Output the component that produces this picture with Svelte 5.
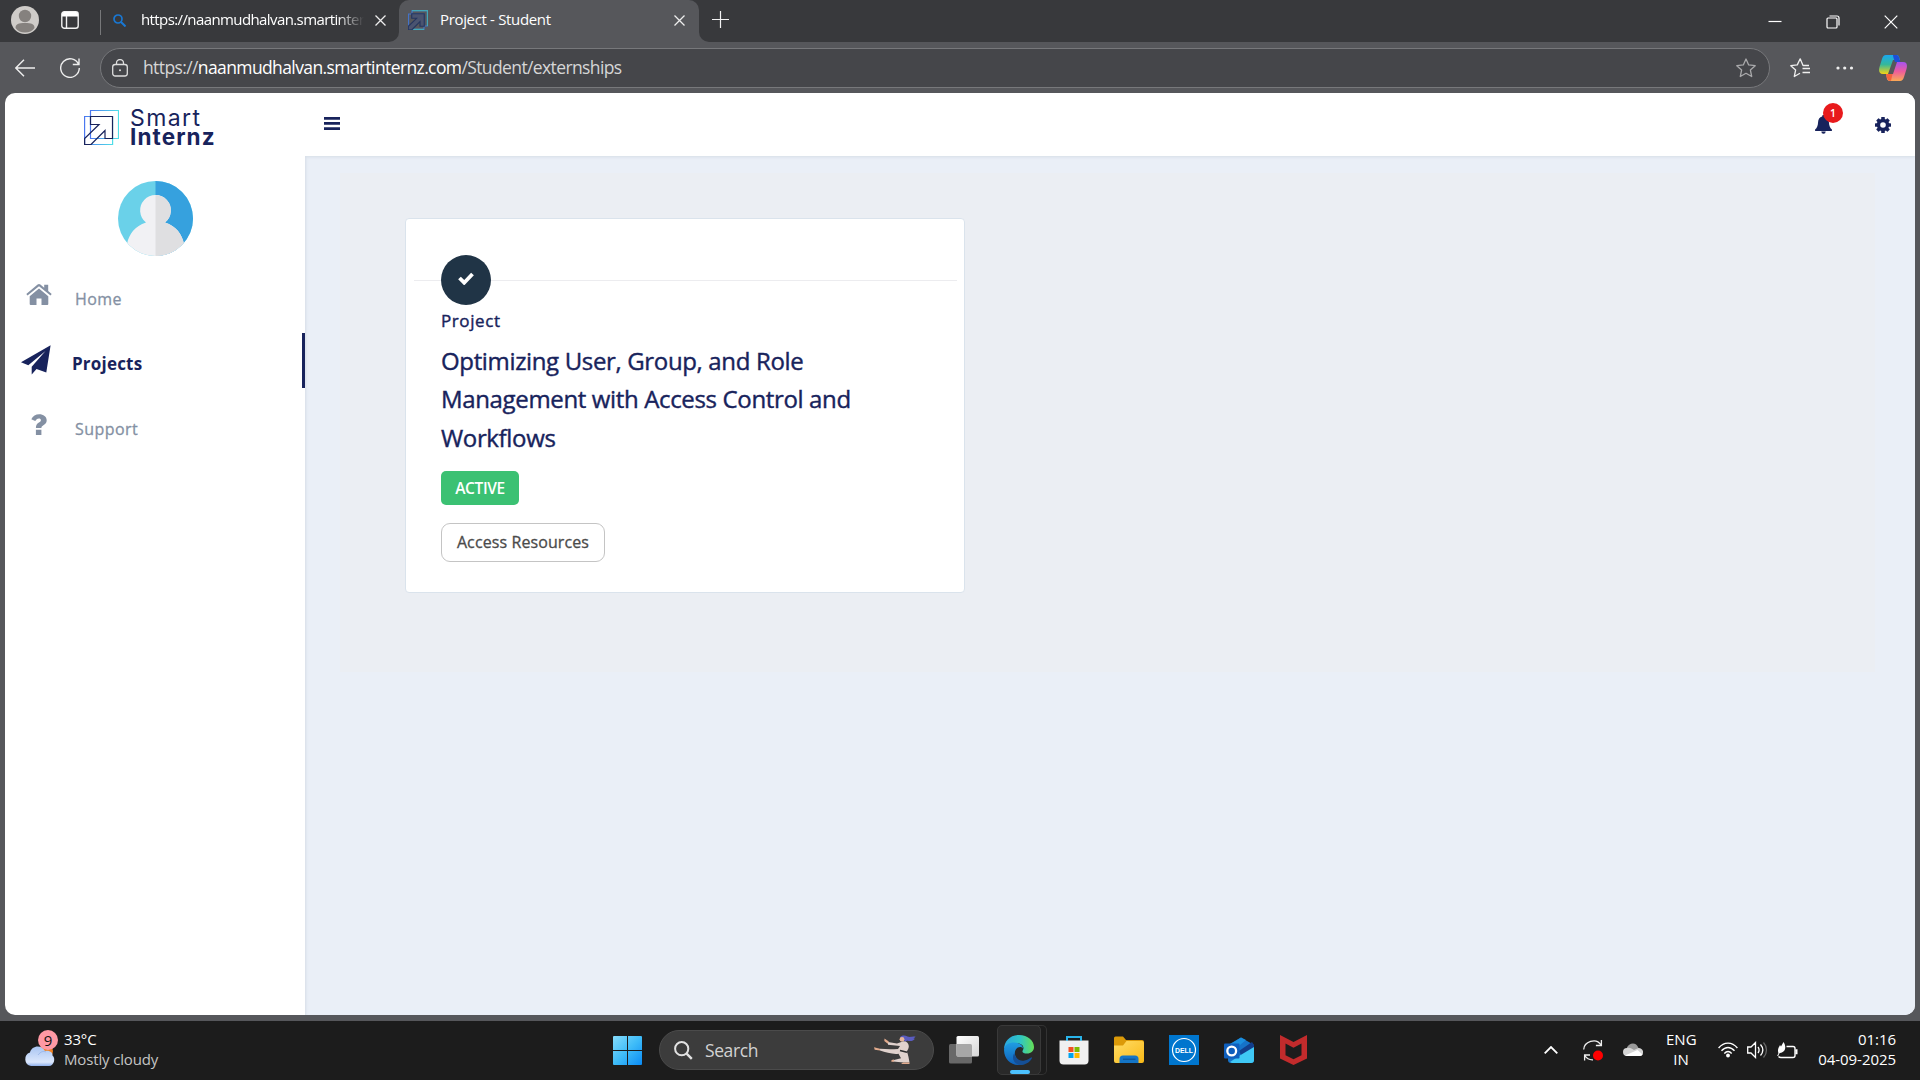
<script>
  const nav = [
    { label: 'Home', icon: 'home' },
    { label: 'Projects', icon: 'plane', active: true },
    { label: 'Support', icon: 'question' }
  ];
</script>

{#snippet logoMark()}
  <path d="M6.5.5h28v28h-28z" fill="none" stroke="url(#markA)" stroke-width="1.200" />
  <path d="M.6 6.500h28v28H.6z" fill="none" stroke="url(#markA)" stroke-width="1.200" />
  <path d="M6.500 6.500H28.500V28.500H21V20.500L7 34.500H.6V28.500L15 14.500H6.500Z" fill="none" stroke="#18235c" stroke-width="1.200" />
{/snippet}

<svg class="defs" width="0" height="0" aria-hidden="true">
  <defs>
    <linearGradient id="markA"><stop offset="0" stop-color="#4b78f0" /><stop offset="1" stop-color="#4fdfe8" /></linearGradient>
    <linearGradient id="win" x1="0" y1="0" x2="1" y2="1"><stop offset="0" stop-color="#86dcfb" /><stop offset=".5" stop-color="#3fbcf8" /><stop offset="1" stop-color="#0a8bf5" /></linearGradient>
    <linearGradient id="cloud" x1="0" y1="0" x2="0" y2="1"><stop offset="0" stop-color="#a9c5f2" /><stop offset=".8" stop-color="#dbe7fc" /><stop offset="1" stop-color="#8fb0ec" /></linearGradient>
    <linearGradient id="edgeA" x1="0" y1="0" x2="1" y2="0"><stop offset="0" stop-color="#2aa5e0" /><stop offset=".55" stop-color="#2fc6c4" /><stop offset="1" stop-color="#66df55" /></linearGradient>
    <linearGradient id="edgeB" x1="0" y1="0" x2="0" y2="1"><stop offset="0" stop-color="#1f9de3" /><stop offset="1" stop-color="#0f5fb8" /></linearGradient>
    <linearGradient id="folder" x1="0" y1="0" x2="1" y2="1"><stop offset="0" stop-color="#ffdc66" /><stop offset="1" stop-color="#f9b916" /></linearGradient>
    <linearGradient id="copA" x1="0" y1="0" x2="0" y2="1"><stop offset="0" stop-color="#1aa8f0" /><stop offset=".5" stop-color="#35b89a" /><stop offset="1" stop-color="#f5d414" /></linearGradient>
    <linearGradient id="copB" x1="0" y1="0" x2="0" y2="1"><stop offset="0" stop-color="#a553f0" /><stop offset=".5" stop-color="#ee5c9c" /><stop offset="1" stop-color="#fbaa55" /></linearGradient>
    <linearGradient id="view" x1="0" y1="0" x2="1" y2="1"><stop offset="0" stop-color="#fff" /><stop offset="1" stop-color="#d5d5d5" /></linearGradient>
  </defs>
</svg>

<div class="screen">
  <div class="strip">
    <div class="strip-left">
      <svg class="profile" width="28" height="28" viewBox="0 0 28 28"><circle cx="14" cy="14" r="14" fill="#cfccc9" /><circle cx="14" cy="10" r="6.200" fill="#85817e" /><path d="M4.500 22c0-4 3-5 9.500-5s9.500 1 9.500 5c-2 3-5.500 4.600-9.500 4.600S6.500 25 4.500 22z" fill="#85817e" /></svg>
      <svg class="workspace" width="18" height="18" viewBox="0 0 18 18"><rect x=".8" y=".8" width="16.400" height="16.400" rx="2.500" fill="none" stroke="#f2f2f2" stroke-width="1.400" /><path d="M1 3a2 2 0 0 1 2-2h12a2 2 0 0 1 2 2v2.500H1z" fill="#fff" /><path d="M5.500 5v12" stroke="#f2f2f2" stroke-width="1.400" /></svg>
      <i class="divider"></i>
      <svg class="lens" width="13" height="13" viewBox="0 0 13 13" fill="none" stroke="#1978d4" stroke-width="1.700"><circle cx="5" cy="5" r="4" /><path d="M8 8l4.500 4.500" stroke-width="2" /></svg>
      <span class="tab-text fade">https://naanmudhalvan.smartinter</span>
      <svg class="x" width="11" height="11" viewBox="0 0 11 11" stroke="#eee" stroke-width="1.300"><path d="M.5.5l10 10M10.500.5l-10 10" /></svg>
    </div>
    <div class="tab">
      <svg width="20" height="20" viewBox="0 0 35 35" fill="none" stroke-width="2"><path d="M7 7V1h27v27h-6M1 7h27v27H1z" stroke="#4473c8" /><path d="M7 1h27v27M7 34h21" stroke="#44a7b8" /><path d="M6.500 6.500H28.500V28.500H21V20.500L7 34.500H.6V28.500L15 14.500H6.500Z" fill="#4a5470" stroke="#26365f" /></svg>
      <span class="tab-text title">Project - Student</span>
      <svg class="x" width="11" height="11" viewBox="0 0 11 11" stroke="#eee" stroke-width="1.300"><path d="M.5.5l10 10M10.500.5l-10 10" /></svg>
    </div>
    <div class="strip-right">
      <svg class="plus" width="17" height="17" viewBox="0 0 17 17" stroke="#f3f3f3" stroke-width="1.200"><path d="M8.500 0v17M0 8.500h17" /></svg>
      <div class="controls">
        <svg width="14" height="14" viewBox="0 0 14 14" stroke="#fff" stroke-width="1.200"><path d="M.5 6.500h13" /></svg>
        <svg width="14" height="14" viewBox="0 0 14 14" fill="none" stroke="#fff" stroke-width="1.200"><rect x="1" y="3" width="10" height="10" rx="1" /><path d="M3.500 1H11a2 2 0 0 1 2 2v7.500" /></svg>
        <svg width="14" height="14" viewBox="0 0 14 14" stroke="#fff" stroke-width="1.200"><path d="M.7.7l12.600 12.600M13.300.7L.7 13.300" /></svg>
      </div>
    </div>
  </div>

  <div class="toolbar">
    <svg class="back" width="20" height="18" viewBox="0 0 20 18" fill="none" stroke="#eee" stroke-width="1.400"><path d="M20 9H1M9 .7L.8 9 9 17.300" /></svg>
    <svg class="reload" width="20" height="20" viewBox="0 0 20 20" fill="none" stroke="#eee" stroke-width="1.400"><path d="M18.600 6.500A9.300 9.300 0 1 0 19.300 10M19 .5v6h-6.200" /></svg>
    <div class="address">
      <svg class="lock" width="16" height="18" viewBox="0 0 16 18" fill="none" stroke="#ddd" stroke-width="1.300"><rect x=".7" y="5.500" width="14.600" height="11.500" rx="2.500" /><path d="M4.500 5.500V4a3.500 3.500 0 0 1 7 0v1.500" /><circle cx="8" cy="11.300" r="1" fill="#ddd" stroke="none" /></svg>
      <span class="url">https://<b>naanmudhalvan.smartinternz.com</b>/Student/externships</span>
      <svg class="star" width="20" height="20" viewBox="0 0 20 20" fill="none" stroke="#a9a9ab" stroke-width="1.300" stroke-linejoin="round"><path d="M10 1l2.700 5.900 6.500.8-4.800 4.400 1.300 6.400L10 15.300l-5.700 3.200 1.300-6.400L.8 7.700l6.500-.8z" /></svg>
    </div>
    <svg class="favs" width="20" height="20" viewBox="0 0 20 20" fill="none" stroke="#eee" stroke-width="1.300" stroke-linejoin="round"><path d="M19 7.500h-6l-2.800-6.700L7.300 6.900l-6.500.8 4.800 4.400-1.300 6.400 5.700-3.200M12.500 10.500H20M12.500 14.500H20" /></svg>
    <svg class="dots" width="18" height="4" viewBox="0 0 18 4" fill="#eee"><circle cx="2" cy="2" r="1.600" /><circle cx="8.700" cy="2" r="1.600" /><circle cx="15.500" cy="2" r="1.600" /></svg>
    <svg class="copilot" width="28" height="26" viewBox="0 0 28 26"><path d="M7 0h10c3 0 3 2 4 5h-7L9 19H4C0 19-.5 16 .5 12L3 4c.8-2.500 2-4 4-4z" fill="url(#copA)" /><path d="M14 0h3c3 0 3.200 2.500 4.200 7H16c-1-3-2-5-2-7z" fill="#1d4fd8" /><path d="M21 26H11c-3 0-3-2-4-7h7l4-12h6c4 0 4.500 3 3.500 7L25 22c-.8 2.500-2 4-4 4z" fill="url(#copB)" /><path d="M7 19h6.500l-1.500 6.800C8.500 26.300 8 23 7 19z" fill="#f4623c" /></svg>
  </div>

  <div class="frame">
    <div class="page">
      <aside>
        <div class="brand">
          <svg width="35" height="35" viewBox="0 0 35 35">{@render logoMark()}</svg>
          <div class="wordmark"><span class="smart">Smart</span><span class="internz">Internz</span></div>
        </div>
        <svg class="avatar" width="75" height="75" viewBox="0 0 75 75">
          <clipPath id="round"><circle cx="37.500" cy="37.500" r="37.500" /></clipPath>
          <clipPath id="half"><rect x="37.500" width="38" height="75" /></clipPath>
          <g clip-path="url(#round)">
            <path d="M0 0h75v75H0z" fill="#6ad1e9" /><path d="M37.500 0H75v75H37.500z" fill="#36a1de" />
            <path d="M28 41.500a15.400 15.400 0 1 1 19 0C58 45 64 53 66 63v12H9V63c2-10 8-18 19-21.500z" fill="#f1f1f4" />
            <path clip-path="url(#half)" d="M28 41.500a15.400 15.400 0 1 1 19 0C58 45 64 53 66 63v12H9V63c2-10 8-18 19-21.500z" fill="#dfdfe1" />
          </g>
        </svg>
        <nav>
          {#each nav as item}
            <div class="item" class:active={item.active}>
              <span class="glyph">
                {#if item.icon === 'home'}
                  <svg width="26" height="21" viewBox="0 0 26 21" fill="currentColor"><path d="M13 4.500l9.300 7.800V20a1 1 0 0 1-1 1H15.500v-6.500h-5V21H4.700a1 1 0 0 1-1-1v-7.700z" /><path d="M.3 9.900L11.600.6q1.400-1.100 2.800 0l3.800 3.200V.7h4v6.400l3.500 2.800-1.200 1.600L13 2.300 1.500 11.500z" /></svg>
                {:else if item.icon === 'plane'}
                  <svg width="30" height="30" viewBox="0 0 30 30" fill="currentColor"><path d="M29.600.3L0 17.200l7.300 3L24.500 6 10.700 21.800V29.500l4.800-5.600 9.800 3.600z" /></svg>
                {:else}
                  <svg width="16" height="21" viewBox="0 0 16 21" fill="currentColor"><path d="M.3 5.200C2 1.800 4.600.2 8.200.2c4.200 0 7.500 2.500 7.500 6 0 2.600-1.300 3.800-3.300 5.100-1.500 1-2 1.400-2 2.800H4.900c0-3 .8-4.400 3-5.700 1.400-.8 2-1.300 2-2.200 0-1-.8-1.700-2-1.700-1.500 0-2.400.8-3.700 2.500zM4.900 15.700h5.500V21H4.900z" /></svg>
                {/if}
              </span>
              <span class="label">{item.label}</span>
            </div>
          {/each}
        </nav>
      </aside>

      <main>
        <header>
          <svg class="bars" width="16" height="13" viewBox="0 0 16 13" fill="#18235c"><path d="M0 0h16v2.700H0zM0 5.100h16v2.700H0zM0 10.300h16V13H0z" /></svg>
          <div class="bell">
            <svg width="17" height="19" viewBox="0 0 17 19" fill="#18235c"><path d="M8.500 0C9.300 0 9.800.5 9.800 1.400c2.800.6 4 2.900 4.100 5.500.2 4 1 5.700 3 7.600V16H.1v-1.500c2-1.900 2.800-3.600 3-7.600.1-2.600 1.300-4.900 4.100-5.500C7.200.5 7.700 0 8.500 0zM6.300 16.500h4.400a2.200 2.200 0 0 1-4.400 0z" /></svg>
            <span class="count">1</span>
          </div>
          <svg class="gear" width="16" height="16" viewBox="0 0 16 16"><g fill="#18235c"><circle cx="8" cy="8" r="6.200" /><rect x="6.200" width="3.600" height="16" rx=".6" /><rect y="6.200" width="16" height="3.600" rx=".6" /><rect x="6.200" width="3.600" height="16" rx=".6" transform="rotate(45 8 8)" /><rect x="6.200" width="3.600" height="16" rx=".6" transform="rotate(-45 8 8)" /></g><circle cx="8" cy="8" r="2.800" fill="#fff" /></svg>
        </header>
        <section class="content">
          <article class="card">
            <div class="step">
              <i class="rule"></i>
              <span class="disc"><svg width="16" height="13" viewBox="0 0 16 13" fill="none" stroke="#fff" stroke-width="3.800"><path d="M1.500 6l4.700 4.700L14.500 2" /></svg></span>
              <i class="rule grow"></i>
            </div>
            <div class="kind">Project</div>
            <h2>Optimizing User, Group, and Role<br />Management with Access Control and<br />Workflows</h2>
            <span class="badge">ACTIVE</span>
            <button>Access Resources</button>
          </article>
        </section>
      </main>
    </div>
  </div>

  <div class="taskbar">
    <div class="weather">
      <svg width="36" height="38" viewBox="0 0 36 38"><circle cx="22" cy="21" r="7" fill="#f08020" /><path d="M7 36a7 7 0 0 1-1-13.500C7.500 16 17 14 21 21c5-1 8 2 7.500 4.500C32 28 30 36 25 36z" fill="url(#cloud)" /><path d="M14 25c3-4 6-4 8-3" fill="none" stroke="#8aa9e2" opacity=".6" /><circle cx="24" cy="10" r="10" fill="#ff99a4" /><text x="24" y="15.500" text-anchor="middle" class="nine">9</text></svg>
      <div class="wtext"><span class="temp">33°C</span><span class="sky">Mostly cloudy</span></div>
    </div>

    <svg class="start" width="29" height="29" viewBox="0 0 29 29"><path d="M1 0h13v14H0V1q0-1 1-1zM15 0h13q1 0 1 1v13H15zM0 15h14v14H1q-1 0-1-1zM15 15h14v13q0 1-1 1H15z" fill="url(#win)" /></svg>
    <div class="search">
      <svg class="glass" width="19" height="19" viewBox="0 0 19 19" fill="none" stroke="#e2e2e2" stroke-width="2"><circle cx="7.700" cy="7.700" r="6.600" /><path d="M12.600 12.600l5.200 5.200" stroke-width="2.400" /></svg>
      <span>Search</span>
      <svg class="kick" width="42" height="30" viewBox="0 0 42 30"><path d="M26 2.500C27.500 0 31 0 33.500 1.500 36.500 2.500 38 1.200 41.500 1.500 41 3 40 3 39.500 3.300c.7.500 1 .4 1.500.5C39 6.500 36 6.500 33 5.500 31.500 7.500 30 6 29.500 4z" fill="#5a5cc0" /><circle cx="28" cy="4.300" r="2.400" fill="#e5b49a" /><path d="M14 7l9 1.600 6.500-2.300c3 0 5 1.700 5.300 4.700.1 2-1 4-2 5.500 1.500 3.500 2 6.500 2.700 11h-6L19 26.500v-1.300l8-2-2.500-4.500C19 19.500 12 17.500 6 15.500V13.800c6 .5 12 .5 18 .2l2-3-12-1.300z" fill="#e0d2cd" /><path d="M26 15.500l7 1.800" stroke="#2c2c2c" stroke-width="1.400" /><path d="M10.500 3.500l4.300 3-1 2.200-3.500-2.800zM0 12.300l6 1.500v1.700l-5.300-.8zM17.500 25l2.500-.5.200 2-2.700.5zM29 27.500h6.500V29H27z" fill="#e2ab8d" /></svg>
    </div>
    <div class="apps">
      <div class="app"><svg width="30" height="28" viewBox="0 0 30 28"><rect y="8" width="23" height="19.500" rx="1.500" fill="#686868" /><rect x="7.500" width="22.500" height="20.500" rx="1.500" fill="url(#view)" /><path d="M7.500 8H21.500q1.500 0 1.500 1.500v11H9q-1.500 0-1.500-1.500z" fill="#a7a7a7" /></svg></div>
      <div class="app edge">
        <div class="tile">
          <svg width="30" height="30" viewBox="0 0 30 30"><path d="M0 15C0 6 6 0 15 0s15 6 15 12c0 4-3 6.500-7 6.500-3 0-5-1-4.500-2.500.5-1.200 1-1.800 1-3C19.500 9 14 7.500 10 8.500 5 9.500 0 12 0 15z" fill="url(#edgeA)" /><path d="M.1 14C1 9.500 5.500 7.500 10 7.500c5 0 9 2.500 9 6-2.500-3-7-1-8 3-1 6 4 11 11 10-2 2.500-5 3.500-8 3.500C6 29.500-.5 23 .1 14z" fill="url(#edgeB)" /><path d="M10.500 18c0 5 5 8.500 10 7.500 3-.5 5-2 6.500-3 .6-.4 1.200.2.800.9C25.500 27.500 21 30 16 30 9 29 7.500 22 10.500 18z" fill="#154f96" /></svg>
        </div>
      </div>
      <div class="app"><svg width="30" height="30" viewBox="0 0 30 30"><path d="M8 7V2h14v5" fill="none" stroke="#29b4ea" stroke-width="2" /><path d="M.5 5.500h29v20q0 4-4 4h-21q-4 0-4-4z" fill="#f0f0f0" /><path d="M8 5.500V4M22 5.500V4" stroke="#29b4ea" stroke-width="2" /><path d="M9.500 12h5v5h-5z" fill="#f25022" /><path d="M15.500 12h5v5h-5z" fill="#7fba00" /><path d="M9.500 18h5v5h-5z" fill="#00a4ef" /><path d="M15.500 18h5v5h-5z" fill="#ffb900" /></svg></div>
      <div class="app"><svg width="30" height="28" viewBox="0 0 30 28"><path d="M0 2q0-1.500 1.500-1.500H9L12 4h16q2 0 2 2v5H0z" fill="#dc9a08" /><path d="M0 9.500h9L12.500 5H28q2 0 2 2v18q0 2-2 2H2q-2 0-2-2z" fill="url(#folder)" /><path d="M5.500 27v-4q0-3.500 3.500-3.500h12q3.500 0 3.500 3.500v4z" fill="#1475c6" /><path d="M9 23.200h12.500" stroke="#0b4c8c" /></svg></div>
      <div class="app"><svg width="30" height="30" viewBox="0 0 30 30"><path d="M0 0h30v30H0z" fill="#0076ce" /><circle cx="15" cy="15" r="11.500" fill="none" stroke="#fff" stroke-width="1.200" /><text x="15" y="17.600" text-anchor="middle" textLength="18" lengthAdjust="spacingAndGlyphs" class="dell">DELL</text></svg></div>
      <div class="app"><svg width="30" height="27" viewBox="0 0 30 27"><path d="M4 8L17 .5 30 8v15q0 3-3 3H7q-3 0-3-3z" fill="#1673c9" /><path d="M5 8L17 .5 22 3 10 13z" fill="#1b8ede" /><path d="M15 14L28 5l2 3v3L18 20z" fill="#123e8c" /><path d="M6 25l9-6 15-9v13q0 3-3 3H8z" fill="#3fc8f5" /><rect y="6.500" width="15.500" height="15" rx="1" fill="#0f5fbd" /><circle cx="7.700" cy="14" r="4.400" fill="none" stroke="#fff" stroke-width="2.300" /></svg></div>
      <div class="app"><svg width="27" height="30" viewBox="0 0 27 30"><path d="M0 0l13.500 7L27 0v23.500L13.500 30 0 23.500zM5.500 8.500v11.800l8 4 8-4V8.500l-8 4.300z" fill="#c22b2c" fill-rule="evenodd" /></svg></div>
    </div>

    <div class="tray">
      <svg class="chev" width="14" height="8" viewBox="0 0 14 8" fill="none" stroke="#fff" stroke-width="1.800"><path d="M.7 7.300L7 1l6.300 6.300" /></svg>
      <svg class="sync" width="20" height="21" viewBox="0 0 20 21" fill="none" stroke="#eee" stroke-width="1.300"><path d="M.7 9.500C1 2 13-3 18 5M18.400 0v5.500h-5.500M1.600 20.500V15H7M1.800 15.500C4 19 7 20 10 19.800" /><circle cx="15" cy="15.500" r="5" fill="#f00" stroke="none" /></svg>
      <svg class="onedrive" width="20" height="14" viewBox="0 0 20 14"><path d="M3.500 5.500C6-.5 13-1.500 15.500 5L20 10l-9-1z" fill="#9a9a9a" /><path d="M4 13a4 4 0 0 1 0-8c3-1 5 1 7 2l4.500-2c3 0 5 2 4.500 5 0 2-1.500 3-3.500 3z" fill="#d5d5d5" /><path d="M2 12.400L14.500 7l5 4.500q-1 1.500-3 1.500H4z" fill="#fff" /></svg>
      <div class="lang"><span>ENG</span><span>IN</span></div>
      <svg class="wifi" width="20" height="16" viewBox="0 0 20 16" fill="none" stroke="#fff" stroke-width="1.400"><path d="M.6 6C6-.5 14-.5 19.400 6M3.500 8.800c4-4.500 9-4.500 13 0M6.300 11.500c2.500-2.700 5-2.700 7.400 0" /><circle cx="10" cy="13.500" r="1.900" fill="#fff" stroke="none" /></svg>
      <svg class="vol" width="21" height="18" viewBox="0 0 21 18" fill="none" stroke="#fff" stroke-width="1.300"><path d="M.7 6H4l4.500-4.500v15L4 12H.7zM11 6c1.300 1.800 1.300 4.200 0 6M13.500 3.500c3 3.500 3 7.500 0 11" /><path d="M16.500 1.500c4 4.500 4 10.500 0 15" stroke="#666" /></svg>
      <svg class="batt" width="21" height="17" viewBox="0 0 21 17" fill="none" stroke="#fff" stroke-width="1.400"><path d="M9.500 4.500H16q2 0 2 2v7q0 2-2 2H4q-1.500 0-2.500-1" /><path d="M18.500 8h1.300v3.500h-1.300" fill="#fff" /><path d="M6.500 0C8.500 3 9 6.500 7 9 5.500 11 3 10.500 1.500 11.500 0 7 2 5.500 3 3l1 1.500z" fill="#fff" stroke="none" /><path d="M.7 14c1-3 2.500-4.500 4.500-6" stroke="#fff" stroke-width="1" /></svg>
      <div class="clock"><span class="time">01:16</span><span>04-09-2025</span></div>
    </div>
  </div>
</div>

<style>
  :global(body) { overflow: hidden; }
  .defs { position: absolute; }
  svg { display: block; flex: none; }
  .screen { width: 1920px; height: 1080px; display: flex; flex-direction: column; background: #56575b; font-family: "Open Sans", "Noto Sans", sans-serif; color: #fff; }
  .strip { height: 42px; display: flex; flex: none; background: linear-gradient(#38393c 50%, #56575b 50%); }
  .strip-left { box-sizing: border-box; width: 399px; background: #38393c; border-bottom-right-radius: 10px; display: flex; align-items: center; padding: 0 0 2px 11px; }
  .workspace { margin-left: 22px; }
  .divider { width: 1px; height: 25px; margin: 4px 12px 0 21px; background: #77787a; }
  .tab-text { font-size: 15px; line-height: 20px; white-space: nowrap; letter-spacing: -.34px; padding-bottom: 2px; }
  .fade { margin: 0 11px 0 15px; width: 223px; letter-spacing: -.6px; mask-image: linear-gradient(90deg, #000 88%, transparent 100%); }
  .tab { box-sizing: border-box; width: 300px; background: #56575b; border-radius: 10px 10px 0 0; display: flex; align-items: center; padding: 0 14px 2px 9px; }
  .title { margin-left: 12px; flex: 1; }
  .strip-right { flex: 1; background: #38393c; border-bottom-left-radius: 10px; display: flex; align-items: center; justify-content: space-between; padding: 0 22px 3px 13px; }
  .controls { display: flex; gap: 44px; padding-top: 4px; }
  .toolbar { height: 51px; flex: none; display: flex; align-items: center; padding-left: 15px; }
  .reload { margin-left: 25px; }
  .address { box-sizing: border-box; width: 1670px; height: 40px; margin-left: 20px; border: 1px solid #77787b; border-radius: 20px; background: #45464a; display: flex; align-items: center; padding: 0 13px 0 11px; }
  .url { margin-left: 15px; padding-bottom: 2px; flex: 1; font-size: 17.5px; line-height: 24px; color: #d6d6d7; letter-spacing: -.61px; }
  .url b { font-weight: 400; color: #fff; }
  .favs { margin-left: 20px; }
  .dots { margin-left: 26px; }
  .copilot { margin-left: 25px; }
  .frame { height: 928px; flex: none; padding: 0 5px; }
  .page { height: 922px; display: flex; background: #fff; border-radius: 10px; overflow: hidden; }
  aside { width: 300px; flex: none; display: flex; flex-direction: column; }
  .brand { display: flex; padding: 17px 0 0 79px; height: 71px; box-sizing: border-box; }
  .wordmark { margin-left: 11px; display: flex; flex-direction: column; color: #18235c; font-family: Inter, sans-serif; margin-top: -2px; }
  .smart { font-size: 23px; line-height: 20px; letter-spacing: 1.400px; }
  .internz { font-size: 22.500px; font-weight: 700; line-height: 18px; letter-spacing: 1.100px; }
  .avatar { margin: 17px 0 0 113px; }
  nav { margin-top: 12px; }
  .item { box-sizing: border-box; height: 55px; margin-bottom: 10px; padding-top: 7px; display: flex; align-items: center; color: #8490a3; }
  .item.active { color: #18235c; border-right: 3px solid #18235c; }
  .glyph { width: 67px; display: flex; justify-content: center; margin-bottom: 9px; }
  .label { font-size: 16px; -webkit-text-stroke: .3px; line-height: 24px; margin-left: 3px; letter-spacing: .45px; }
  .active .glyph { width: 61px; }
  .active .label { font-size: 17px; font-weight: 700; margin-left: 6px; letter-spacing: .2px; -webkit-text-stroke: 0; }
  main { flex: 1; display: flex; flex-direction: column; background: #eaeff7; box-shadow: inset 3px 0 3px -2px #d5dde6; }
  header { height: 63px; box-sizing: border-box; background: #fff; display: flex; align-items: flex-start; padding: 24px 24px 0 19px; box-shadow: 0 1px 3px #d5dde6; clip-path: inset(0 0 -6px 0); }
  .bell { position: relative; margin: -2px 43px 0 auto; }
  .count { position: absolute; left: 8px; top: -12px; width: 20px; height: 20px; border-radius: 50%; background: #e81a1c; font-size: 10.500px; line-height: 21px; text-align: center; font-weight: 600; }
  .content { box-sizing: border-box; margin: 17px 40px 0 35px; height: 499px; background: #ebeef3; padding: 45px 0 0 65px; }
  .card { box-sizing: border-box; width: 560px; height: 375px; background: #fff; border: 1px solid #dae3ec; border-radius: 4px; display: flex; flex-direction: column; align-items: flex-start; color: #18235c; padding: 36px 7px 0 8px; }
  .step { width: 100%; display: flex; align-items: center; }
  .rule { width: 27px; height: 1px; background: #ececef; }
  .grow { flex: 1; }
  .disc { width: 50px; height: 50px; border-radius: 50%; background: #203446; display: flex; align-items: center; justify-content: center; }
  .disc svg { margin-top: -3px; }
  .kind { margin: 3px 0 0 27px; font-size: 17px; -webkit-text-stroke: .4px; letter-spacing: .6px; line-height: 26px; }
  h2 { margin: 8px 0 0 27px; font-size: 24px; line-height: 38.400px; font-weight: 400; -webkit-text-stroke: .4px; letter-spacing: -.35px; white-space: nowrap; }
  .badge { margin: 14px 0 0 27px; width: 78px; height: 34px; border-radius: 5px; background: #3bc173; color: #fff; font-size: 15.500px; font-weight: 600; letter-spacing: -.4px; line-height: 34px; text-align: center; }
  button { margin: 18px 0 0 27px; width: 164px; height: 39px; border: 1px solid #c4c4c4; border-radius: 9px; background: #fff; color: #4b4b4b; padding: 0 0 2px; font: 400 16px/24px "Open Sans", sans-serif; letter-spacing: .1px; -webkit-text-stroke: .3px; }
  .taskbar { height: 59px; background: #1c1c1c; display: flex; align-items: center; flex: none; }
  .weather { display: flex; align-items: center; width: 613px; box-sizing: border-box; padding: 0 0 4px 24px; }
  .nine { font-size: 15px; fill: #111; }
  .wtext { margin: 0 0 0 4px; display: flex; flex-direction: column; font-size: 15px; line-height: 20px; letter-spacing: -.15px; }
  .sky { color: #c4c4c4; }
  .search { box-sizing: border-box; width: 275px; height: 40px; margin: 0 2px 1px 17px; background: #3c3c3c; border: 1px solid #4b4b4b; border-radius: 20px; display: flex; align-items: center; padding: 0 17px 0 14px; font-size: 17.500px; color: #d2d2d2; letter-spacing: -.4px; }
  .search span { margin-left: 12px; flex: 1; }
  .apps { display: flex; padding-bottom: 1px; }
  .app { width: 55px; height: 58px; display: flex; align-items: center; justify-content: center; }
  .tile { position: relative; width: 44px; height: 50px; box-sizing: border-box; border: 1px solid #393939; border-radius: 5px; background: #292929; display: flex; justify-content: center; align-items: center; box-shadow: 6px 0 0 -1px #1c1c1c, 6px 0 0 #333; }
  .tile::after { content: ""; position: absolute; bottom: 0; left: 12px; width: 20px; height: 4px; border-radius: 2px; background: #4cc2ff; }
  .dell { font: 700 7px "Liberation Sans", sans-serif; fill: #fff; }
  .tray { margin-left: auto; display: flex; align-items: center; padding: 0 24px 1px 0; }
  .sync { margin-left: 25px; }
  .onedrive { margin-left: 20px; }
  .lang { width: 30px; margin: -2px 0 0 23px; display: flex; flex-direction: column; text-align: center; font-size: 15px; line-height: 20px; }
  .wifi { margin-left: 22px; }
  .vol { margin-left: 9px; }
  .batt { margin-left: 9px; }
  .clock { width: 98px; margin-top: -3px; display: flex; flex-direction: column; text-align: right; font-size: 15px; line-height: 20px; letter-spacing: -.05px; }
</style>
